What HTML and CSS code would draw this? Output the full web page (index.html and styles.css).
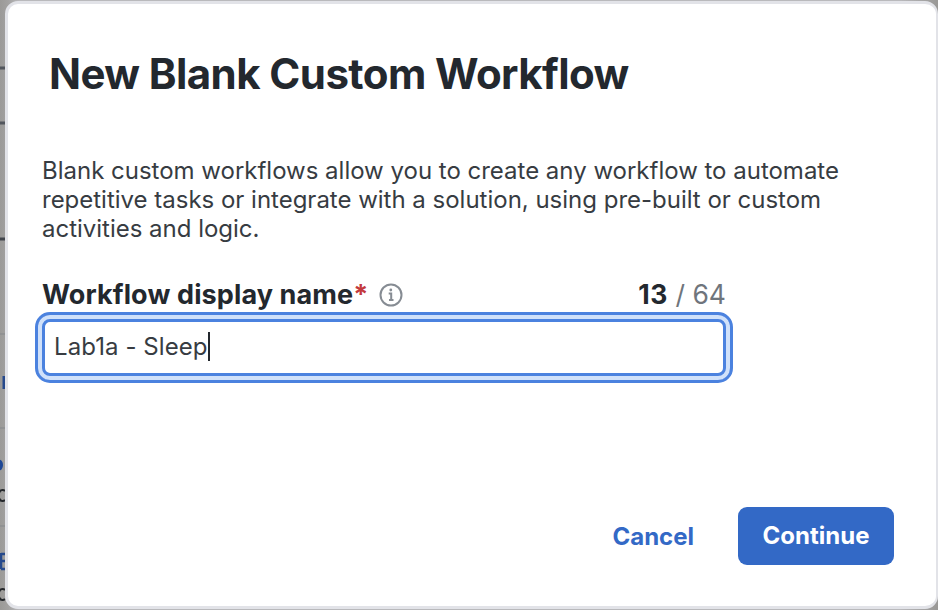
FILE: index.html
```html
<!DOCTYPE html>
<html lang="en">
<head>
<meta charset="utf-8">
<title>New Blank Custom Workflow</title>
<link rel="stylesheet" href="styles.css">
</head>
<body>
<svg class="backdrop" width="8" height="610" viewBox="0 0 8 610">
  <path d="M0 68h6M0 123h6" stroke="#53575e" stroke-width="3"/>
  <path d="M0 239h6" stroke="#41454c" stroke-width="3"/>
  <path d="M0 334h6M0 428h6M0 526h6" stroke="#85878b" stroke-width="1"/>
  <path d="M4 376v13" stroke="#26498c" stroke-width="3"/>
  <ellipse cx="-1" cy="465" rx="4" ry="5.500" fill="#1d4796"/>
  <path d="M5 491c-2-2-5-1-6 2M5 500c-2 2-5 1-6-2M5 590c-2-2-5-1-6 2M5 599c-2 2-5 1-6-2" stroke="#25282c" stroke-width="2" fill="none"/>
  <path d="M1 553v16M1 554h5M1 561h4M1 569h5" stroke="#26498c" stroke-width="2.500"/>
</svg>
<main class="dialog">
  <h1 class="title">New Blank Custom Workflow</h1>
  <p class="description">Blank custom workflows allow you to create any workflow to automate<br>repetitive tasks or integrate with a solution, using pre-built or custom<br>activities and logic.</p>
  <div class="field">
    <div class="label-row">
      <span class="label">Workflow display name<span class="required">*</span></span>
      <svg class="info" viewBox="0 0 24 24" fill="none" stroke="#868c93" stroke-width="2"><circle cx="12" cy="12" r="10.500"/><path d="M9.700 10.500h2.500v6.500M10 17h4.500"/><circle cx="11.800" cy="7" r="1.400" fill="#868c93" stroke="none"/></svg>
      <span class="counter"><b>13</b> / 64</span>
    </div>
    <div class="input"><span class="value">Lab1a - Sleep</span><span class="caret"></span></div>
  </div>
  <div class="actions">
    <span class="cancel">Cancel</span>
    <span class="continue">Continue</span>
  </div>
</main>
</body>
</html>
```
FILE: styles.css
```css
* { box-sizing: border-box; }
body { margin: 0; width: 938px; height: 610px; overflow: hidden; background: linear-gradient(90deg, #9b9a98, #a3a2a1 8px, #b9b9bc 20px, #b9b9bc 900px, #999896); font-family: Inter, sans-serif; color: #23282e; padding: 1px 0 1px 5px; }
.backdrop { position: absolute; left: 0; top: 0; }
.dialog { position: relative; height: 608px; background: #fff; border: 3px solid #e2e3e8; border-right-width: 2px; border-radius: 13px; padding: 42px 42px 0 34px; display: flex; flex-direction: column; }
.title { margin: 0 0 0 7px; font-size: 42px; line-height: 56px; font-weight: 700; white-space: nowrap; letter-spacing: -0.58px; }
.description { margin: 54px 0 0; font-size: 24px; line-height: 29px; white-space: nowrap; color: #373c42; letter-spacing: -0.01px; }
.field { width: 684px; margin-top: 34px; }
.label-row { display: flex; align-items: center; height: 35px; font-size: 27px; }
.label { font-weight: 700; letter-spacing: 0.12px; }
.required { color: #c43a3e; }
.info { width: 24px; height: 24px; margin-left: 10px; }
.counter { margin-left: auto; color: #6f757c; font-size: 26.5px; line-height: 32px; padding-bottom: 1px; }
.counter b { color: #23282e; letter-spacing: 0.6px; }
.input { width: 698px; height: 71px; margin: 0 0 0 -7px; display: flex; align-items: center; padding: 0 0 2px 10px; font-size: 24px; letter-spacing: 0.08px; color: #373c42; border: 3px solid #4b82df; border-radius: 15px; box-shadow: inset 0 0 0 4px #d0e1fa, inset 0 0 0 7px #4b82df; }
.value { padding-left: 6px; }
.caret { width: 2px; height: 29px; background: #23282e; }
.actions { display: flex; justify-content: flex-end; align-items: center; margin-top: 124px; font-size: 24px; font-weight: 700; }
.cancel { color: #3369c6; margin-right: 44px; }
.continue { background: #3369c6; color: #fff; border-radius: 9px; width: 156px; height: 58px; line-height: 58px; text-align: center; }
```
